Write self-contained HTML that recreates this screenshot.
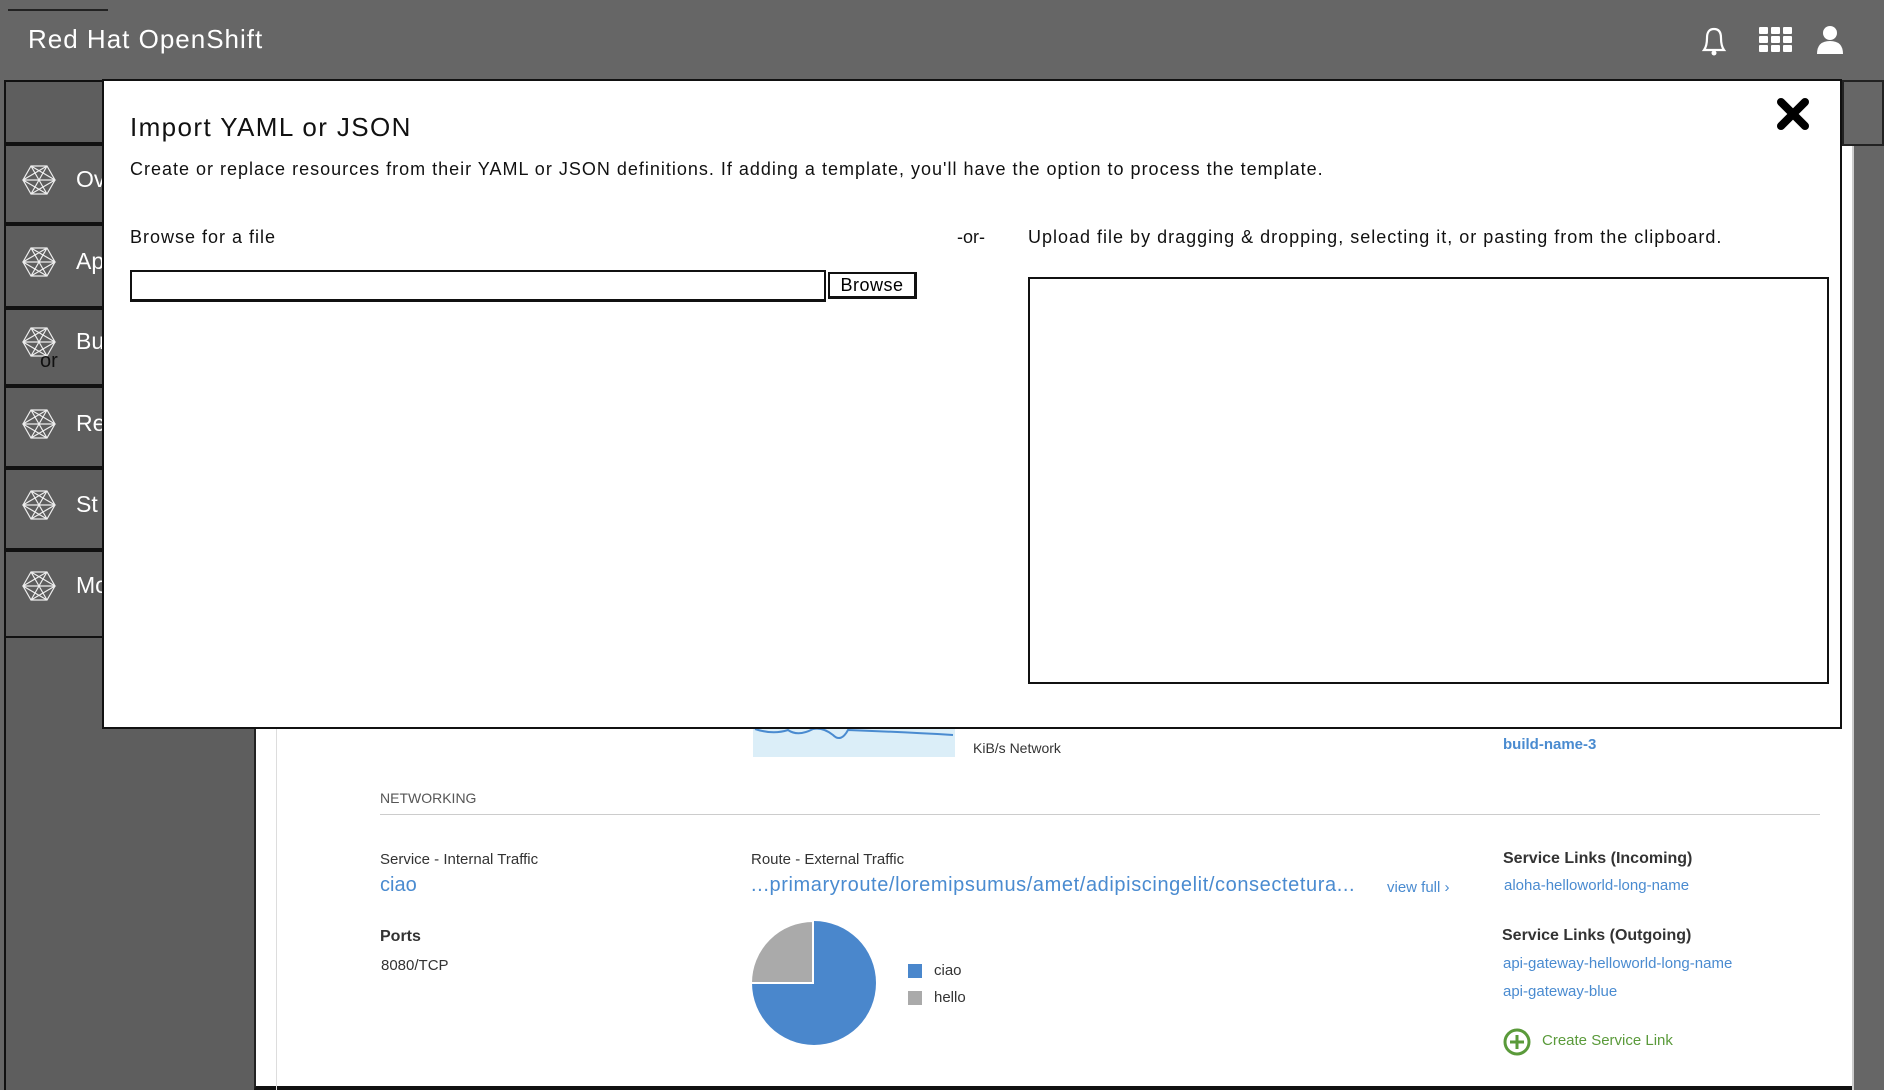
<!DOCTYPE html>
<html><head><meta charset="utf-8"><style>
*{margin:0;padding:0;box-sizing:border-box}
body{width:1884px;height:1090px;overflow:hidden;background:#666;font-family:"Liberation Sans",sans-serif;position:relative}
.a{position:absolute;white-space:nowrap}
.side{position:absolute;left:4px;width:250px;background:#5e5e5e;border:2px solid #111;border-right:none}
.lbl{color:#333;font-size:15px}
.blue{color:#4a8bd0}
.m{letter-spacing:1px}
.ic{position:absolute;left:22px}
.nl{position:absolute;left:76px;color:#fff;font-size:23px}
</style></head><body>
<!-- header -->
<div class="a" style="left:0;top:0;width:1884px;height:80px;background:#666"></div>
<div class="a" style="left:8px;top:9px;width:100px;height:2px;background:#222"></div>
<div class="a m" style="left:28px;top:24px;color:#fff;font-size:26px">Red Hat OpenShift</div>
<svg class="a" style="left:1697px;top:24px" width="34" height="34" viewBox="0 0 34 34"><path d="M7 26 Q10 22 10 14 Q10 5 17 5 Q24 5 24 14 Q24 22 27 26 Z" fill="none" stroke="#fff" stroke-width="2.2"/><circle cx="17" cy="29" r="2.5" fill="#fff"/></svg>
<svg class="a" style="left:1759px;top:27px" width="34" height="26"><g fill="#fff"><rect x="0" y="0" width="9" height="7" rx="1"/><rect x="12" y="0" width="9" height="7" rx="1"/><rect x="24" y="0" width="9" height="7" rx="1"/><rect x="0" y="9" width="9" height="7" rx="1"/><rect x="12" y="9" width="9" height="7" rx="1"/><rect x="24" y="9" width="9" height="7" rx="1"/><rect x="0" y="18" width="9" height="7" rx="1"/><rect x="12" y="18" width="9" height="7" rx="1"/><rect x="24" y="18" width="9" height="7" rx="1"/></g></svg>
<svg class="a" style="left:1816px;top:25px" width="28" height="30"><circle cx="14" cy="8" r="7" fill="#fff"/><path d="M1 29 Q1 16 14 16 Q27 16 27 29 Z" fill="#fff"/></svg>
<!-- sidebar -->
<div class="side" style="top:80px;height:64px"></div>
<div class="side" style="top:144px;height:80px"></div>
<div class="side" style="top:224px;height:84px"></div>
<div class="side" style="top:308px;height:78px"></div>
<div class="side" style="top:386px;height:82px"></div>
<div class="side" style="top:468px;height:82px"></div>
<div class="side" style="top:550px;height:88px"></div>
<div class="a" style="left:4px;top:638px;width:250px;height:452px;background:#5e5e5e;border-left:2px solid #111"></div>
<svg width="0" height="0" style="position:absolute"><defs><g id="hx"><path d="M9 2 H25 L33 16 L25 30 H9 L1 16 Z M9 2 L25 30 M25 2 L9 30 M1 16 H33 M9 2 L33 16 L9 30 M25 2 L1 16 L25 30" fill="none" stroke="#eee" stroke-width="1.2"/></g></defs></svg>
<svg class="ic" style="top:164px" width="36" height="32"><use href="#hx"/></svg><div class="nl" style="top:166px">Ov</div>
<svg class="ic" style="top:246px" width="36" height="32"><use href="#hx"/></svg><div class="nl" style="top:248px">Ap</div>
<svg class="ic" style="top:326px" width="36" height="32"><use href="#hx"/></svg><div class="nl" style="top:328px">Bu</div>
<svg class="ic" style="top:408px" width="36" height="32"><use href="#hx"/></svg><div class="nl" style="top:410px">Re</div>
<svg class="ic" style="top:489px" width="36" height="32"><use href="#hx"/></svg><div class="nl" style="top:491px">St</div>
<svg class="ic" style="top:570px" width="36" height="32"><use href="#hx"/></svg><div class="nl" style="top:572px">Mo</div>
<div class="a" style="left:40px;top:350px;font-size:20px;color:#111">or</div>
<!-- main panel -->
<div class="a" style="left:254px;top:80px;width:1600px;height:1010px;background:#fff;border-left:2px solid #222;border-bottom:4px solid #111"></div>
<div class="a" style="left:1842px;top:80px;width:42px;height:66px;background:#666;border:2px solid #222"></div>
<div class="a" style="left:276px;top:700px;width:1px;height:390px;background:#ddd"></div>
<div class="a" style="left:1852px;top:146px;width:2px;height:944px;background:#ccc"></div>
<!-- below modal content -->
<div class="a" style="left:753px;top:727px;width:202px;height:30px;background:#dbeef8"></div>
<svg class="a" style="left:753px;top:727px" width="205" height="20"><path d="M2 2 Q20 8 35 3 Q45 10 60 2 Q70 0 80 8 Q88 16 95 3 Q150 5 200 8" fill="none" stroke="#4a8bd0" stroke-width="2"/></svg>
<div class="a lbl" style="left:973px;top:740px;font-size:14px">KiB/s Network</div>
<div class="a blue" style="left:1503px;top:736px;font-size:15px;font-weight:bold">build-name-3</div>
<div class="a" style="left:380px;top:790px;font-size:14px;color:#555">NETWORKING</div>
<div class="a" style="left:380px;top:814px;width:1440px;height:1px;background:#ccc"></div>
<div class="a lbl" style="left:380px;top:851px">Service - Internal Traffic</div>
<div class="a blue" style="left:380px;top:874px;font-size:20px">ciao</div>
<div class="a lbl" style="left:751px;top:851px">Route - External Traffic</div>
<div class="a blue" style="left:751px;top:874px;font-size:20px;letter-spacing:0.6px">...primaryroute/loremipsumus/amet/adipiscingelit/consectetura...</div>
<div class="a blue" style="left:1387px;top:879px;font-size:15px">view full ›</div>
<div class="a" style="left:1503px;top:850px;font-size:16px;font-weight:bold;color:#333">Service Links (Incoming)</div>
<div class="a blue" style="left:1504px;top:877px;font-size:15px">aloha-helloworld-long-name</div>
<div class="a" style="left:380px;top:928px;font-size:16px;font-weight:bold;color:#333">Ports</div>
<div class="a lbl" style="left:381px;top:957px">8080/TCP</div>
<svg class="a" style="left:750px;top:920px" width="130" height="126"><circle cx="64" cy="63" r="62" fill="#4a87cc"/><path d="M63 63 L63 1 A62 62 0 0 0 1 63 Z" fill="#aaa" stroke="#fff" stroke-width="2"/></svg>
<div class="a" style="left:908px;top:964px;width:14px;height:14px;background:#4a87cc"></div>
<div class="a" style="left:908px;top:991px;width:14px;height:14px;background:#aaa"></div>
<div class="a lbl" style="left:934px;top:962px">ciao</div>
<div class="a lbl" style="left:934px;top:989px">hello</div>
<div class="a" style="left:1502px;top:927px;font-size:16px;font-weight:bold;color:#333">Service Links (Outgoing)</div>
<div class="a blue" style="left:1503px;top:955px;font-size:15px">api-gateway-helloworld-long-name</div>
<div class="a blue" style="left:1503px;top:983px;font-size:15px">api-gateway-blue</div>
<svg class="a" style="left:1503px;top:1028px" width="28" height="28"><circle cx="14" cy="14" r="12" fill="none" stroke="#5a9a3a" stroke-width="3"/><path d="M14 7 V21 M7 14 H21" stroke="#5a9a3a" stroke-width="3"/></svg>
<div class="a" style="left:1542px;top:1032px;font-size:15px;color:#5a9a3a">Create Service Link</div>
<!-- modal -->
<div class="a" style="left:102px;top:79px;width:1740px;height:650px;background:#fff;border:2px solid #111"></div>
<div class="a" style="left:130px;top:112px;font-size:26px;color:#111;letter-spacing:1.4px">Import YAML or JSON</div>
<div class="a m" style="left:130px;top:159px;font-size:18px;color:#111">Create or replace resources from their YAML or JSON definitions. If adding a template, you'll have the option to process the template.</div>
<div class="a m" style="left:130px;top:227px;font-size:18px;color:#111">Browse for a file</div>
<div class="a" style="left:130px;top:270px;width:696px;height:32px;border:2px solid #111;border-bottom-width:3px"></div>
<div class="a" style="left:828px;top:272px;width:89px;height:27px;border:2px solid #111;border-right-width:3px;border-bottom-width:3px;font-size:18px;text-align:center;line-height:22px;letter-spacing:0.5px">Browse</div>
<div class="a" style="left:957px;top:227px;font-size:18px;color:#111">-or-</div>
<div class="a m" style="left:1028px;top:227px;font-size:18px;color:#111">Upload file by dragging &amp; dropping, selecting it, or pasting from the clipboard.</div>
<div class="a" style="left:1028px;top:277px;width:801px;height:407px;border:2px solid #111"></div>
<svg class="a" style="left:1776px;top:97px" width="34" height="34"><path d="M5 5 L29 29 M29 5 L5 29" stroke="#000" stroke-width="8" stroke-linecap="round"/></svg>
</body></html>
